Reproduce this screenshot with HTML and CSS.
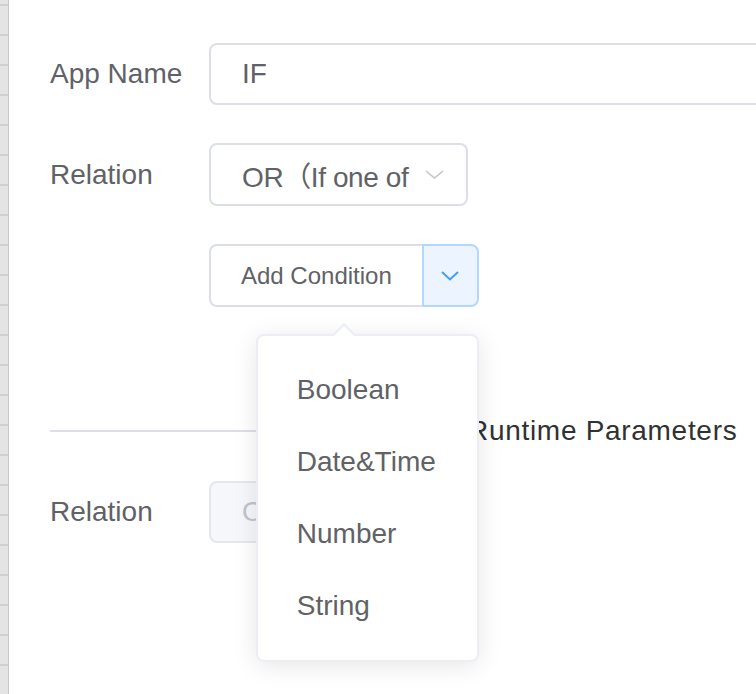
FILE: index.html
```html
<!DOCTYPE html>
<html lang="en">
<head>
<meta charset="utf-8">
<title>App</title>
<link rel="stylesheet" href="styles.css">
</head>
<body>
<div class="page">
  <aside class="rail"></aside>
  <main class="content">
    <div class="row">
      <label class="label">App Name</label>
      <div class="input">IF</div>
    </div>
    <div class="row row-tall">
      <label class="label">Relation</label>
      <div class="select">
        <span class="select-text">OR（If one of</span>
        <svg class="chev" width="19" height="9" viewBox="0 0 19 9"><path d="M1 1 L9.5 8 L18 1" fill="none" stroke="#c0c4cc" stroke-width="1.5"/></svg>
      </div>
    </div>
    <div class="row row-tall">
      <span class="label"></span>
      <div class="btn-group">
        <button class="btn main-btn">Add Condition</button>
        <button class="btn drop-btn">
          <svg width="18" height="10" viewBox="0 0 18 10"><path d="M1 1 L9 8.5 L17 1" fill="none" stroke="#409eff" stroke-width="2"/></svg>
        </button>
        <ul class="popper">
          <li class="item">Boolean</li>
          <li class="item">Date&amp;Time</li>
          <li class="item">Number</li>
          <li class="item">String</li>
        </ul>
      </div>
    </div>
    <div class="divider">
      <span class="line line-left"></span>
      <span class="divider-text">Runtime Parameters</span>
      <span class="line line-right"></span>
    </div>
    <div class="row row-last">
      <label class="label">Relation</label>
      <div class="select disabled">
        <span class="select-text">OR</span>
      </div>
    </div>
  </main>
</div>
</body>
</html>
```

FILE: styles.css
```css
html, body {
  margin: 0;
  padding: 0;
  background: #fff;
  overflow: hidden;
}
body {
  font-family: "Liberation Sans", "Noto Sans CJK SC", sans-serif;
  color: #606266;
}
.page {
  display: flex;
  min-height: 694px;
}
.rail {
  flex: none;
  width: 8px;
  border-right: 1px solid #c9c9c9;
  background: repeating-linear-gradient(to bottom, #e4e4e4 0 4px, #d0d0d0 4px 6px, #e4e4e4 6px 30px);
}
.content {
  flex: 1;
  display: flex;
  flex-direction: column;
  padding: 43px 0 0 41px;
  min-width: 0;
}
.row {
  display: flex;
  align-items: center;
  height: 62px;
  margin-bottom: 38px;
}
.row-tall {
  height: 63px;
}
.label {
  flex: none;
  width: 159px;
  font-size: 28px;
  color: #606266;
}
.input {
  flex: none;
  width: 700px;
  height: 62px;
  box-sizing: border-box;
  border: 2px solid #dcdfe6;
  border-radius: 8px;
  padding: 0 31px;
  font-size: 28px;
  display: flex;
  align-items: center;
}
.select {
  flex: none;
  width: 259px;
  height: 100%;
  box-sizing: border-box;
  border: 2px solid #dcdfe6;
  border-radius: 8px;
  padding: 0 22px 0 31px;
  font-size: 28px;
  display: flex;
  align-items: center;
  background: #fff;
}
.select-text {
  flex: 1;
  min-width: 0;
  overflow: hidden;
  white-space: nowrap;
  letter-spacing: -0.4px;
}
.chev {
  flex: none;
  margin-left: 14px;
}
.select.disabled {
  background: #f5f7fa;
  border-color: #e4e7ed;
  color: #c0c4cc;
  padding-right: 55px;
}
.btn-group {
  position: relative;
  display: flex;
  flex: none;
  height: 100%;
}
.btn {
  height: 100%;
  box-sizing: border-box;
  margin: 0;
  font-family: inherit;
  font-size: 24px;
  color: #606266;
  background: #fff;
  border: 2px solid #dcdfe6;
  cursor: pointer;
}
.main-btn {
  padding: 0 30px;
  border-right: none;
  border-radius: 8px 0 0 8px;
}
.drop-btn {
  width: 57px;
  padding: 0;
  background: #ecf5ff;
  border-color: #b3d8ff;
  border-radius: 0 8px 8px 0;
  display: flex;
  align-items: center;
  justify-content: center;
}
.drop-btn svg {
  display: block;
}
.popper {
  position: absolute;
  top: calc(100% + 27px);
  right: 0;
  width: 223px;
  box-sizing: border-box;
  margin: 0;
  padding: 18px 0;
  list-style: none;
  background: #fff;
  border: 2px solid #ebeef5;
  border-radius: 8px;
  box-shadow: 0 4px 24px rgba(0, 0, 0, 0.1);
  z-index: 10;
}
.popper::before,
.popper::after {
  content: "";
  position: absolute;
  width: 0;
  height: 0;
  border-style: solid;
}
.popper::before {
  top: -13px;
  left: 74px;
  border-width: 0 12px 12px 12px;
  border-color: transparent transparent #ebeef5 transparent;
}
.popper::after {
  top: -10px;
  left: 76px;
  border-width: 0 10px 10px 10px;
  border-color: transparent transparent #fff transparent;
}
.item {
  height: 72px;
  line-height: 72px;
  padding: 0 39px;
  font-size: 28px;
  color: #606266;
  white-space: nowrap;
}
.divider {
  display: flex;
  align-items: center;
  height: 40px;
  margin-top: 66px;
}
.line {
  flex: none;
  height: 2px;
  background: #dcdfe6;
}
.line-left {
  width: 398px;
}
.line-right {
  width: 200px;
}
.divider-text {
  flex: none;
  padding: 0 24px 0 20px;
  font-size: 28px;
  letter-spacing: 0.7px;
  color: #303133;
  white-space: nowrap;
}
.row-last {
  margin-top: 30px;
}
```
